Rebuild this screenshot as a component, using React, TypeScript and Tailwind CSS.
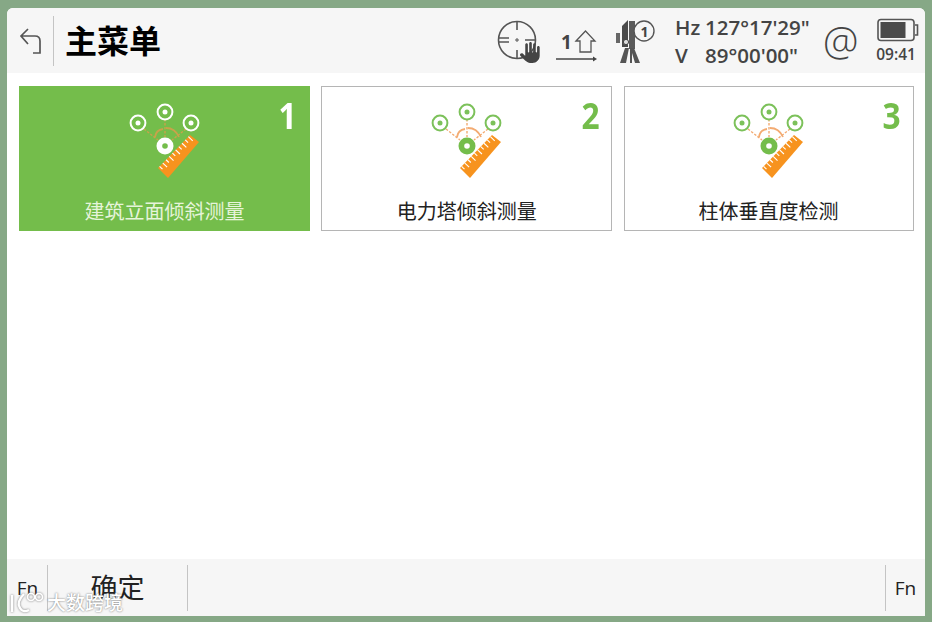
import { FaHand } from "react-icons/fa6";

const CJK = "font-['Open_Sans','Noto_Sans_CJK_SC',sans-serif]";

type Mode = { ring: string; disc: string; hole: string; line: string; tick: string };

const GREEN_ICON: Mode = { ring: "#7cc15a", disc: "#74bd4b", hole: "#ffffff", line: "#f3ab72", tick: "#ffffff" };
const WHITE_ICON: Mode = { ring: "#ffffff", disc: "#ffffff", hole: "#74bd4b", line: "#c9a24a", tick: "#ffffff" };

// target + ruler drawing used on each card
function MeasureIcon({ mode }: { mode: Mode }) {
  const targets = [
    [10, 23],
    [37, 12],
    [63, 23],
  ];
  // tick marks along the ruler's long edge
  const ticks = Array.from({ length: 10 }, (_, i) => {
    const t = (i + 0.5) / 10;
    const x = 62 + (30 - 62) * t;
    const y = 35 + (68 - 35) * t;
    const len = i % 2 === 0 ? 6 : 4;
    return <line key={i} x1={x} y1={y} x2={x + len * 0.72} y2={y + len * 0.69} stroke={mode.tick} strokeWidth="1.1" />;
  });
  return (
    <svg width="74" height="80" viewBox="0 0 74 80" fill="none">
      <path d="M16 29 L30 40 M58 29 L44 40 M37 19 L37 37" stroke={mode.line} strokeWidth="1.4" strokeDasharray="2.5 1.5" />
      <path d="M27 37 Q28 30 35 29 M38 28 Q47 28 51 37" stroke={mode.line} strokeWidth="1.8" />
      {targets.map(([x, y]) => (
        <g key={x}>
          <circle cx={x} cy={y} r="7.4" stroke={mode.ring} strokeWidth="2" />
          <circle cx={x} cy={y} r="2.5" fill={mode.ring} />
        </g>
      ))}
      <path d="M71 42 L62 35 L30 68 L40 78 Z" fill="#f7931e" />
      {ticks}
      <circle cx="37" cy="46" r="8.5" fill={mode.disc} />
      <circle cx="37" cy="46" r="2.8" fill={mode.hole} />
    </svg>
  );
}

const CARDS = [
  { n: 1, label: "建筑立面倾斜测量", active: true },
  { n: 2, label: "电力塔倾斜测量", active: false },
  { n: 3, label: "柱体垂直度检测", active: false },
];

function MenuCard({ n, label, active }: { n: number; label: string; active: boolean }) {
  return (
    <div
      className={`relative flex h-[145px] flex-col items-center border pt-[13px] ${
        active ? "border-[#74bd4b] bg-[#74bd4b]" : "border-[#b5b5b5] bg-white"
      }`}
    >
      <MeasureIcon mode={active ? WHITE_ICON : GREEN_ICON} />
      <div className={`mt-[17px] text-[20px] leading-[30px] ${active ? "text-[#e6f4da]" : "text-[#222222]"}`}>{label}</div>
      <span
        className={`absolute right-[12px] top-[6px] origin-right scale-x-[0.88] text-[36px] font-bold leading-[46px] ${
          active ? "text-white" : "text-[#74bd4b]"
        }`}
      >
        {n}
      </span>
    </div>
  );
}

function Crosshair() {
  return (
    <div className="relative h-[44px] w-[44px]">
      <svg width="44" height="44" viewBox="0 0 44 44" fill="none" stroke="#555555" strokeWidth="1.6">
        <circle cx="20" cy="21" r="18.5" />
        <path d="M20 2.5 V11 M20 31 V39.5 M1.5 19 H12 M1.5 23 H12 M28 21 H38" />
        <path d="M18 21 H22 M20 19 V23" strokeWidth="1" />
      </svg>
      <FaHand className="absolute bottom-0 right-0 text-[21px] text-[#444444]" />
    </div>
  );
}

function HeightMark() {
  return (
    <svg width="44" height="38" viewBox="0 0 44 38" fill="none">
      <text x="6" y="21" fontSize="19" fontWeight="700" fill="#444444" fontFamily="Open Sans, sans-serif">
        1
      </text>
      <path d="M21 13 L30.5 3 L40 13 H36 V24 H25 V13 Z" stroke="#555555" strokeWidth="1.3" />
      <path d="M1 31 H40" stroke="#444444" strokeWidth="1.6" />
      <path d="M38 28.5 L42 31 L38 33.5 Z" fill="#444444" />
    </svg>
  );
}

function Instrument() {
  return (
    <svg width="42" height="48" viewBox="0 0 42 48" fill="none">
      <path d="M7 9 L13 3 V30 L7 30 Z" fill="#4a4a4a" />
      <rect x="1" y="16" width="4" height="10" fill="#666666" />
      <path d="M14 4 H20 V32 H14 Z" fill="#5a5a5a" />
      <circle cx="11" cy="25" r="2.6" fill="#dddddd" stroke="#444444" />
      <path d="M5 46 L10 31 H14 L11 46 Z M15 46 V31 H19 L25 46 H20 L17 36 L17 46 Z" fill="#555555" />
      <circle cx="29" cy="14" r="10" fill="#f6f6f6" stroke="#555555" strokeWidth="1.4" />
      <text x="25.5" y="19.5" fontSize="14" fontWeight="700" fill="#444444" fontFamily="Open Sans, sans-serif">
        1
      </text>
    </svg>
  );
}

function Battery() {
  return (
    <svg width="42" height="24" viewBox="0 0 42 24" fill="none">
      <rect x="1" y="1.5" width="36" height="21" rx="3" stroke="#555555" strokeWidth="1.6" />
      <rect x="3.5" y="4" width="25" height="16" fill="#4a4a4a" />
      <path d="M38 7 H40.5 V17 H38" stroke="#555555" strokeWidth="1.6" />
    </svg>
  );
}

export default function App() {
  return (
    <div className={`h-[622px] w-[932px] overflow-hidden bg-[#86a886] pb-[6px] pl-[7px] pr-[7px] pt-[8px] ${CJK}`}>
      <div className="relative flex h-full flex-col overflow-hidden rounded-tl-[6px] rounded-tr-[6px] bg-white">
        {/* Header */}
        <header className="flex h-[65px] shrink-0 items-center bg-[#f6f6f6]">
          <div className="flex w-[46px] justify-center">
            <svg width="24" height="28" viewBox="0 0 24 28" fill="none" stroke="#555555" strokeWidth="1.7" className="ml-[1px] mt-[1px]">
              <path d="M9 2 L2 9 L9 17 M2 9 H16 Q21 9 21 14 V26 H14" />
            </svg>
          </div>
          <div className="h-[50px] w-px bg-[#c4c4c4]" />
          <h1 className="ml-[11px] text-[32px] font-bold leading-none text-black">主菜单</h1>

          <div className="ml-auto flex items-center">
            <Crosshair />
            <div className="ml-[14px] mt-[13px]">
              <HeightMark />
            </div>
            <div className="ml-[16px]">
              <Instrument />
            </div>
            <div className="ml-[18px] w-[140px] text-[20.5px] font-semibold leading-[28px] text-[#444444]">
              <div className="flex">
                <span className="w-[30px]">Hz</span>
                <span>127°17'29"</span>
              </div>
              <div className="flex">
                <span className="w-[30px]">V</span>
                <span>89°00'00"</span>
              </div>
            </div>
            <span className="ml-[8px] w-[37px] text-[40px] font-light leading-none text-[#444444]">@</span>
            <div className="ml-[17px] mr-[6px] flex w-[42px] flex-col items-center">
              <Battery />
              <span className="mr-[4px] mt-[3px] text-[15.5px] font-semibold leading-[18px] text-[#444444]">09:41</span>
            </div>
          </div>
        </header>

        {/* Menu cards */}
        <main className="grid flex-1 grid-cols-[291px_291px_290px] content-start gap-x-[11.3px] pl-[12px] pt-[13px]">
          {CARDS.map((c) => (
            <MenuCard key={c.n} {...c} />
          ))}
        </main>

        {/* Function keys */}
        <footer className="flex h-[57px] shrink-0 items-center bg-[#f6f6f6]">
          <div className="flex w-[40px] justify-center pl-[1px] pt-[2px] text-[19px] text-[#222222]">Fn</div>
          <div className="h-[46px] w-px bg-[#c4c4c4]" />
          <div className="flex w-[139px] justify-center pt-[2px] text-[27px] text-[#222222]">确定</div>
          <div className="h-[46px] w-px bg-[#c4c4c4]" />
          <div className="ml-auto h-[46px] w-px bg-[#c4c4c4]" />
          <div className="flex w-[39px] justify-center pt-[2px] text-[19px] text-[#222222]">Fn</div>
        </footer>

        {/* Watermark over the footer */}
        <div className="absolute bottom-0 left-[1px] flex items-center text-white">
          <svg width="38" height="26" viewBox="0 0 38 26" fill="none" stroke="#ffffff" strokeWidth="2.4" className="[filter:drop-shadow(0_0_1px_#777777)]">
            <path d="M4 5 V22 M16 4 Q8 12 12 18 Q15 23 21 20" />
            <circle cx="23" cy="7" r="3.5" strokeWidth="1.6" />
            <circle cx="31" cy="7" r="3.5" strokeWidth="1.6" />
          </svg>
          <span className="ml-[1px] text-[19px] font-medium leading-[26px] [text-shadow:0_0_2px_#666666]">大数跨境</span>
        </div>
      </div>
    </div>
  );
}
